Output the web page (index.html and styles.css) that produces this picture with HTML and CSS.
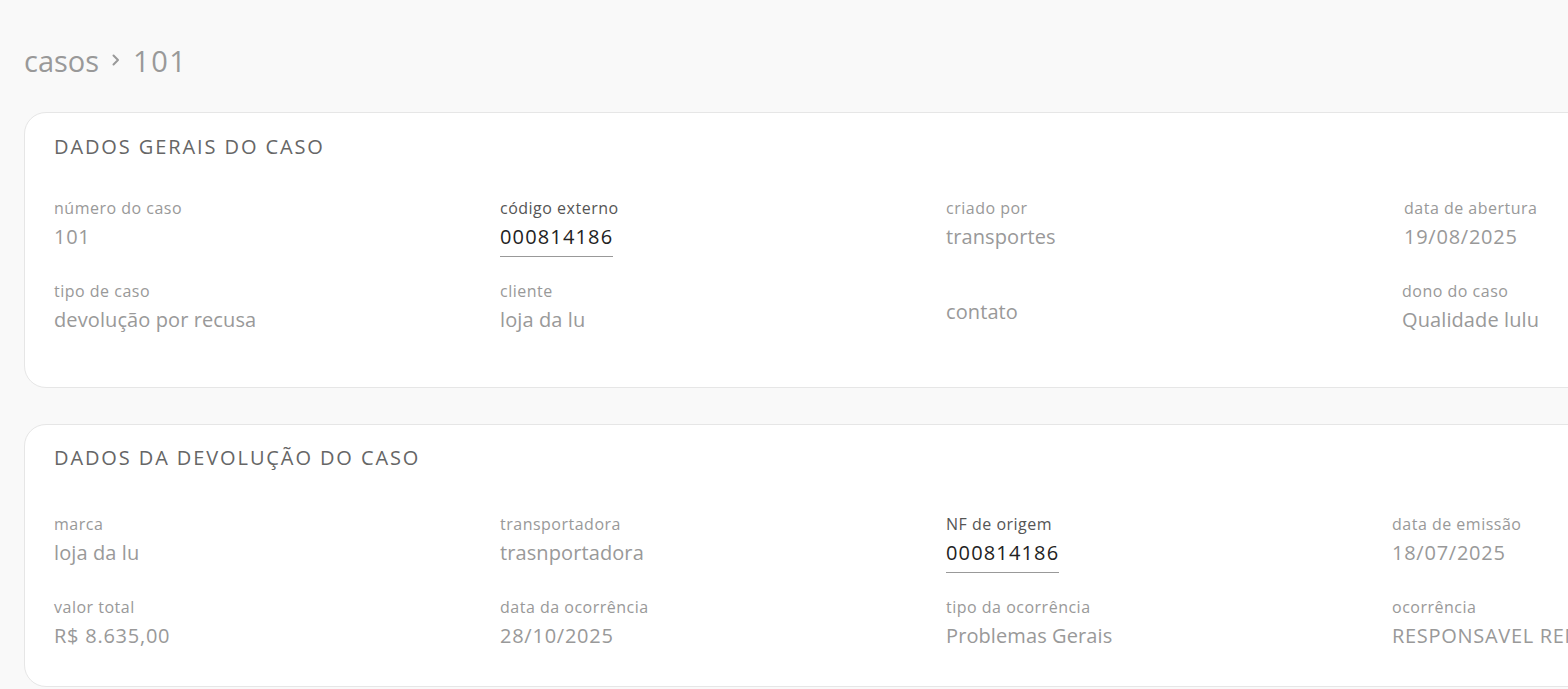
FILE: index.html
```html
<!DOCTYPE html>
<html lang="pt-BR">
<head>
<meta charset="utf-8">
<title>casos › 101</title>
<link rel="stylesheet" href="styles.css">
</head>
<body>
<main class="page">
  <nav class="crumbs">
    <span class="crumb">casos</span>
    <svg class="chev" viewBox="0 0 12 16" width="12" height="16"><path d="M3.5 3.5 L8 8 L3.5 12.5" fill="none" stroke="#999" stroke-width="2" stroke-linecap="round" stroke-linejoin="round"/></svg>
    <span class="crumb num">101</span>
  </nav>

  <section class="card card-gerais">
    <h2 class="card-title">DADOS GERAIS DO CASO</h2>
    <div class="grid grid-gerais">
      <div class="field"><div class="label">número do caso</div><div class="value num">101</div></div>
      <div class="field"><div class="label dark">código externo</div><div class="value link">000814186</div></div>
      <div class="field"><div class="label">criado por</div><div class="value">transportes</div></div>
      <div class="field"><div class="label">data de abertura</div><div class="value num">19/08/2025</div></div>

      <div class="field"><div class="label">tipo de caso</div><div class="value">devolução por recusa</div></div>
      <div class="field"><div class="label">cliente</div><div class="value">loja da lu</div></div>
      <div class="field center"><div class="value">contato</div></div>
      <div class="field shift"><div class="label">dono do caso</div><div class="value">Qualidade lulu</div></div>
    </div>
  </section>

  <section class="card card-devol">
    <h2 class="card-title">DADOS DA DEVOLUÇÃO DO CASO</h2>
    <div class="grid grid-devol">
      <div class="field"><div class="label">marca</div><div class="value">loja da lu</div></div>
      <div class="field"><div class="label">transportadora</div><div class="value">trasnportadora</div></div>
      <div class="field"><div class="label dark">NF de origem</div><div class="value link">000814186</div></div>
      <div class="field"><div class="label">data de emissão</div><div class="value num">18/07/2025</div></div>

      <div class="field"><div class="label">valor total</div><div class="value num">R$ 8.635,00</div></div>
      <div class="field"><div class="label">data da ocorrência</div><div class="value num">28/10/2025</div></div>
      <div class="field"><div class="label">tipo da ocorrência</div><div class="value">Problemas Gerais</div></div>
      <div class="field"><div class="label">ocorrência</div><div class="value caps">RESPONSAVEL REMETENTE - RECUSA</div></div>
    </div>
  </section>
</main>
</body>
</html>
```

FILE: styles.css
```css
html, body {
  margin: 0;
  padding: 0;
  background: #f9f9f9;
  overflow: hidden;
  height: 689px;
}

body {
  font-family: "Open Sans", "Noto Sans", sans-serif;
  color: #999;
}

.page {
  padding: 38px 0 0 24px;
  width: 1800px;
}

.crumbs {
  display: flex;
  align-items: center;
  gap: 0;
  height: 46px;
  margin-bottom: 28px;
}

.crumb {
  font-size: 29px;
  color: #999;
  line-height: 46px;
}

.crumb.num {
  letter-spacing: 1.5px;
}

.chev {
  margin: 0 11px 2px 11px;
}

.card {
  background: #fff;
  border: 1px solid #e6e6e6;
  border-radius: 22px;
  box-sizing: border-box;
  padding: 21px 0 0 29px;
  width: 1700px;
}

.card-gerais {
  height: 276px;
  margin-bottom: 36px;
}

.card-devol {
  height: 263px;
  padding-top: 20px;
}

.card-title {
  margin: 0;
  font-family: "Open Sans", sans-serif;
  font-weight: 400;
  font-size: 20px;
  letter-spacing: 1.9px;
  color: #666;
  line-height: 26px;
}

.grid {
  display: grid;
  row-gap: 29px;
}

.grid-gerais {
  margin-top: 37px;
  grid-template-columns: 446px 446px 458px 1fr;
}

.grid-devol {
  margin-top: 42px;
  grid-template-columns: 446px 446px 446px 1fr;
}

.field {
  display: flex;
  flex-direction: column;
}

.field.center {
  justify-content: center;
  padding-top: 6px;
}

.field.shift {
  margin-left: -2px;
}

.label {
  font-size: 16px;
  letter-spacing: 0.5px;
  line-height: 22px;
  color: #999;
}

.label.dark {
  color: #555;
}

.value {
  font-size: 20px;
  letter-spacing: 0.1px;
  line-height: 28px;
  color: #999;
  margin-top: 4px;
  white-space: nowrap;
}

.value.num {
  letter-spacing: 0.75px;
}

.value.caps {
  letter-spacing: 0.7px;
}

.value.link {
  color: #222;
  letter-spacing: 1.15px;
  align-self: flex-start;
  border-bottom: 1px solid #999;
  padding-bottom: 5px;
  margin-bottom: -6px;
}
```
